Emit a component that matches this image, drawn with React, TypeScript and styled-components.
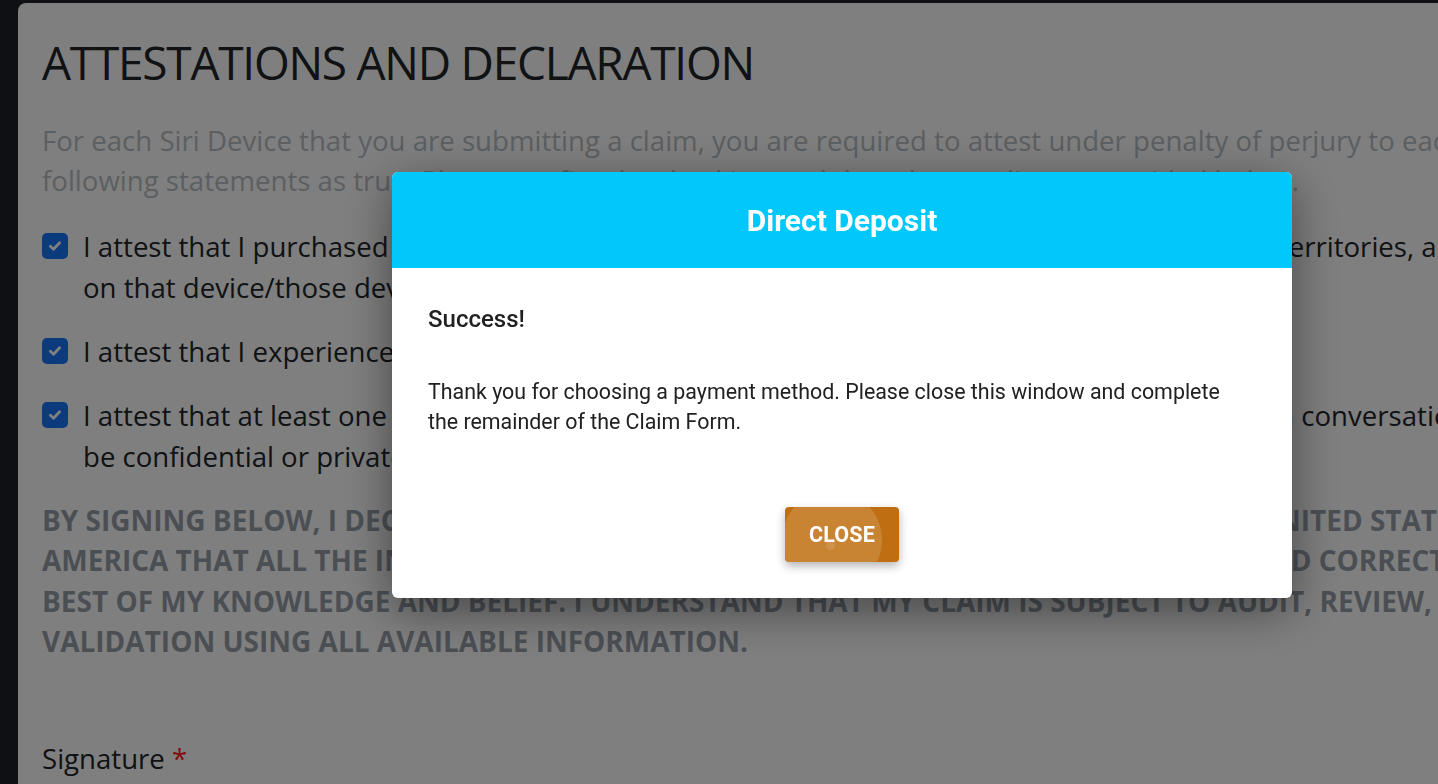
import React from 'react'
import styled, { createGlobalStyle } from 'styled-components'

const GlobalStyle = createGlobalStyle`
    html, body {
        margin: 0;
        padding: 0;
        background: #1f2127;
        overflow: hidden;
    }
    * {
        box-sizing: border-box;
    }
`

const CheckIcon = () => (
    <svg width="16" height="16" viewBox="0 0 16 16" fill="none">
        <path
            d="M3.4 8.3l3.1 3 6.1-6.5"
            stroke="#ffffff"
            strokeWidth="2.8"
            strokeLinecap="round"
            strokeLinejoin="round"
        />
    </svg>
)

const attestations = [
    [
        'I attest that I purchased or owned one or more Siri Devices located in the United States or its territories, and enabled Siri',
        'on that device/those devices during the Class Period.'
    ],
    [
        'I attest that I experienced an unintended Siri activation during the Class Period.'
    ],
    [
        'I attest that at least one of the unintended Siri activations on my Siri Devices occurred during a conversation that was intended to',
        'be confidential or private.'
    ]
]

export default function App() {
    return (
        <>
            <GlobalStyle />
            <LayoutPage>
                <LayoutCard>
                    <TextTitle>ATTESTATIONS AND DECLARATION</TextTitle>
                    <TextIntro>
                        For each Siri Device that you are submitting a claim, you are required to attest under penalty of perjury to each of the
                        <br />
                        following statements as true. Please confirm by checking each box that applies as provided below.
                    </TextIntro>
                    <LayoutChecklist>
                        {attestations.map((lines, i) => (
                            <LayoutCheckRow key={i}>
                                <InputCheckbox>
                                    <CheckIcon />
                                </InputCheckbox>
                                <TextStatement>
                                    {lines.map((line, j) => (
                                        <React.Fragment key={j}>
                                            {j > 0 && <br />}
                                            {line}
                                        </React.Fragment>
                                    ))}
                                </TextStatement>
                            </LayoutCheckRow>
                        ))}
                    </LayoutChecklist>
                    <TextDeclaration>
                        BY SIGNING BELOW, I DECLARE, UNDER PENALTY OF PERJURY, UNDER THE LAWS OF THE UNITED STATES OF
                        <br />
                        AMERICA THAT ALL THE INFORMATION I HAVE PROVIDED IN THIS CLAIM FORM IS TRUE, AND CORRECT TO THE
                        <br />
                        BEST OF MY KNOWLEDGE AND BELIEF. I UNDERSTAND THAT MY CLAIM IS SUBJECT TO AUDIT, REVIEW, AND
                        <br />
                        VALIDATION USING ALL AVAILABLE INFORMATION.
                    </TextDeclaration>
                    <TextLabel>
                        Signature <TextRequired>*</TextRequired>
                    </TextLabel>
                </LayoutCard>
            </LayoutPage>
            <LayoutBackdrop>
                <LayoutDialog>
                    <LayoutDialogHeader>
                        <TextDialogTitle>Direct Deposit</TextDialogTitle>
                    </LayoutDialogHeader>
                    <LayoutDialogBody>
                        <TextSuccess>Success!</TextSuccess>
                        <TextMessage>
                            Thank you for choosing a payment method. Please close this window and complete the remainder of the Claim Form.
                        </TextMessage>
                        <LayoutDialogActions>
                            <InputCloseButton>CLOSE</InputCloseButton>
                        </LayoutDialogActions>
                    </LayoutDialogBody>
                </LayoutDialog>
            </LayoutBackdrop>
        </>
    )
}

const LayoutPage = styled.div`
    width: 100vw;
    height: 100vh;
    padding: 3px 0 0 18px;
    overflow: hidden;
`
const LayoutCard = styled.div`
    width: 1900px;
    min-height: 900px;
    background: #ffffff;
    border-radius: 8px;
    padding: 28px 24px;
    font-family: 'Open Sans', 'Noto Sans', sans-serif;
    color: #212529;
`
const TextTitle = styled.h1`
    margin: 0 0 27px;
    font-size: 46px;
    font-weight: 400;
    line-height: 62px;
    letter-spacing: -1.25px;
`
const TextIntro = styled.p`
    margin: 0 0 26px;
    font-size: 27.6px;
    line-height: 40px;
    color: #b8bec5;
    white-space: nowrap;
`
const LayoutChecklist = styled.div`
    display: flex;
    flex-direction: column;
    gap: 23px;
`
const LayoutCheckRow = styled.div`
    display: flex;
    align-items: flex-start;
    gap: 15px;
`
const InputCheckbox = styled.span`
    flex: none;
    display: flex;
    align-items: center;
    justify-content: center;
    width: 26px;
    height: 26px;
    margin-top: 7px;
    border-radius: 5px;
    background: #1677fa;
`
const TextStatement = styled.p`
    margin: 0;
    font-size: 27.6px;
    line-height: 41px;
    white-space: nowrap;
`
const TextDeclaration = styled.p`
    margin: 23px 0 0;
    font-size: 28px;
    font-weight: 700;
    line-height: 40.4px;
    color: #979fa9;
    white-space: nowrap;
`
const TextLabel = styled.div`
    margin-top: 76px;
    font-size: 27.6px;
    line-height: 40px;
`
const TextRequired = styled.span`
    color: #ff1e1e;
`
const LayoutBackdrop = styled.div`
    position: fixed;
    inset: 0;
    background: rgba(0, 0, 0, 0.5);
    display: flex;
    align-items: flex-start;
    padding: 172px 0 0 392px;
`
const LayoutDialog = styled.div`
    width: 900px;
    background: #ffffff;
    border-radius: 6px;
    overflow: hidden;
    box-shadow: 0 12px 48px rgba(0, 0, 0, 0.45);
    font-family: Roboto, 'Liberation Sans', sans-serif;
`
const LayoutDialogHeader = styled.div`
    height: 96px;
    background: #00c8fb;
    display: flex;
    align-items: center;
    justify-content: center;
`
const TextDialogTitle = styled.h2`
    margin: 0;
    color: #ffffff;
    font-size: 30px;
    font-weight: 700;
`
const LayoutDialogBody = styled.div`
    padding: 36px 36px 36px;
    color: #212121;
`
const TextSuccess = styled.div`
    font-size: 24px;
    font-weight: 500;
    line-height: 30px;
`
const TextMessage = styled.p`
    margin: 43px 0 0;
    max-width: 812px;
    font-size: 21.4px;
    line-height: 30px;
`
const LayoutDialogActions = styled.div`
    display: flex;
    justify-content: center;
    margin-top: 70px;
`
const InputCloseButton = styled.button`
    position: relative;
    overflow: hidden;
    width: 114px;
    height: 55px;
    border: none;
    border-radius: 4px;
    background: #bf6f12;
    color: #ffffff;
    font-family: Roboto, 'Liberation Sans', sans-serif;
    font-size: 21.5px;
    font-weight: 700;
    letter-spacing: 0.2px;
    box-shadow: 0 4px 10px rgba(0, 0, 0, 0.3);
    &::before {
        content: '';
        position: absolute;
        left: -3px;
        top: -17px;
        width: 100px;
        height: 100px;
        border-radius: 50%;
        background: rgba(255, 255, 255, 0.14);
    }
    &::after {
        content: '';
        position: absolute;
        left: 41px;
        top: 34px;
        width: 9px;
        height: 9px;
        border-radius: 50%;
        background: rgba(255, 255, 255, 0.12);
    }
`
